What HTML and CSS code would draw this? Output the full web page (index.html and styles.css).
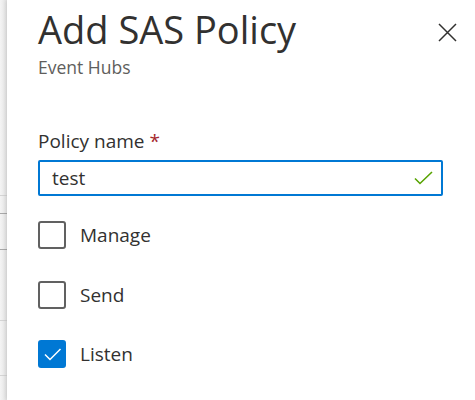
FILE: index.html
```html
<!DOCTYPE html>
<html lang="en">
<head>
<meta charset="utf-8">
<title>Add SAS Policy</title>
<link rel="stylesheet" href="styles.css">
</head>
<body>
<div class="page">
  <div class="backdrop">
    <div class="row r1"></div>
    <div class="row r2"></div>
    <div class="row r3"></div>
    <div class="row r4"></div>
    <div class="row r5"></div>
  </div>
  <div class="panel">
    <header class="head">
      <div class="titles">
        <h1 class="title">Add SAS Policy</h1>
        <div class="sub">Event Hubs</div>
      </div>
      <button class="close" aria-label="Close">
        <svg width="19" height="19" viewBox="0 0 19 19"><path d="M1 1 L18 18 M18 1 L1 18" stroke="#323130" stroke-width="1.5" fill="none"/></svg>
      </button>
    </header>
    <div class="field">
      <label class="label">Policy name <span class="req">*</span></label>
      <div class="input">
        <span class="value">test</span>
        <svg class="ok" width="19" height="14" viewBox="0 0 19 14"><path d="M1 7.5 L6 12.5 L18 1" stroke="#57a300" stroke-width="1.6" fill="none"/></svg>
      </div>
    </div>
    <div class="checks">
      <div class="check"><span class="box"></span><span class="clabel">Manage</span></div>
      <div class="check"><span class="box"></span><span class="clabel">Send</span></div>
      <div class="check"><span class="box on"><svg width="28" height="28" viewBox="0 0 28 28"><path d="M7 14.5 L12 19.5 L22.5 9" stroke="#fff" stroke-width="1.5" fill="none"/></svg></span><span class="clabel">Listen</span></div>
    </div>
  </div>
</div>
</body>
</html>
```
FILE: styles.css
```css
html, body {
  margin: 0;
  padding: 0;
  background: #fff;
}
.page {
  display: flex;
  width: 475px;
  height: 400px;
  overflow: hidden;
  font-family: "Open Sans", "Noto Sans", sans-serif;
  color: #323130;
}
.backdrop {
  width: 7px;
  flex: none;
  background: linear-gradient(to right, #f4f4f4, #e4e4e4);
}
.row { border-bottom: 1px solid #d4d4d4; }
.r1 { height: 195px; }
.r2 { height: 17px; border-bottom-color: #a8a8a8; }
.r3 { height: 35px; border-bottom-color: #a8a8a8; }
.r4 { height: 70px; }
.r5 { height: 54px; }
.panel {
  flex: 1;
  background: #fff;
  padding: 0 32px 0 31px;
  box-shadow: -1px 0 4px rgba(0,0,0,0.12);
  position: relative;
}
.head {
  display: flex;
  justify-content: space-between;
  align-items: flex-start;
  padding-top: 6px;
  margin-right: -14px;
}
.title {
  margin: 0;
  font-size: 38px;
  line-height: 46px;
  font-weight: 400;
}
.sub {
  margin-top: 3px;
  font-size: 17.5px;
  line-height: 24px;
  color: #605e5c;
}
.close {
  border: 0;
  background: none;
  padding: 0;
  margin-top: 17px;
  width: 19px;
  height: 19px;
  display: block;
}
.close svg { display: block; }
.field {
  margin-top: 49px;
  display: flex;
  flex-direction: column;
}
.label {
  font-size: 19px;
  line-height: 26px;
}
.req { color: #a4262c; }
.input {
  margin-top: 6px;
  height: 36px;
  box-sizing: border-box;
  border: 2px solid #0078d4;
  border-radius: 2px;
  display: flex;
  align-items: center;
  justify-content: space-between;
  padding: 0 8px 0 12px;
}
.value {
  font-size: 19px;
  line-height: 26px;
}
.ok { display: block; }
.checks {
  margin-top: 25px;
  display: flex;
  flex-direction: column;
  gap: 31.5px;
}
.check {
  display: flex;
  align-items: center;
  gap: 14px;
  height: 28px;
}
.box {
  width: 28px;
  height: 28px;
  box-sizing: border-box;
  border: 2px solid #616161;
  border-radius: 3px;
  flex: none;
}
.box.on {
  background: #0078d4;
  border-color: #0078d4;
  position: relative;
}
.box.on svg { position: absolute; left: -2px; top: -2px; }
.clabel {
  font-size: 19px;
  line-height: 26px;
}
```
